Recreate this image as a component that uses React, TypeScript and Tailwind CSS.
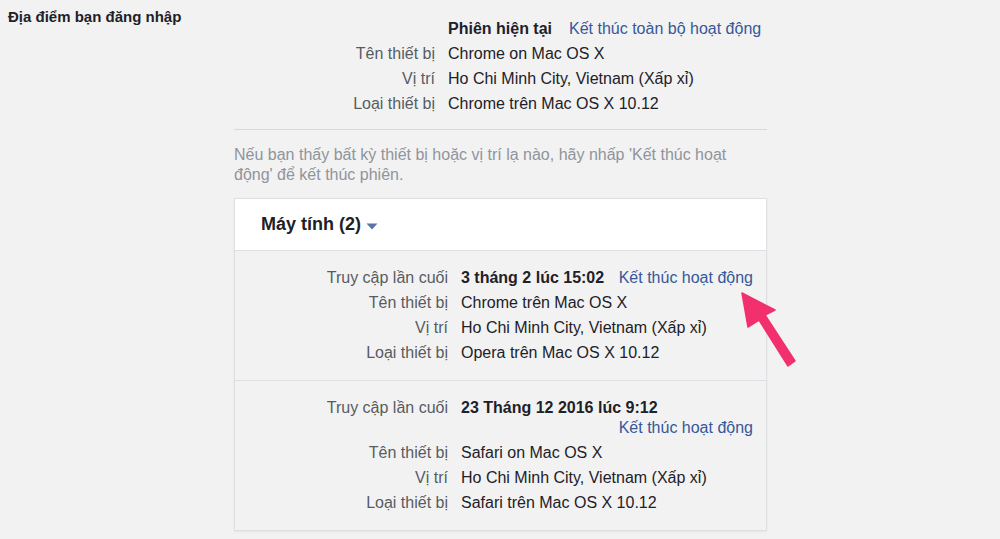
const font = "font-['Liberation_Sans','Helvetica_Neue',Arial,sans-serif]";

type Row = { label: string; value: string };

function Section({
  lastAccess,
  inline,
  rows,
  first,
}: {
  lastAccess: string;
  inline: boolean;
  rows: Row[];
  first?: boolean;
}) {
  return (
    <div
      className={`grid grid-cols-[213px_1fr] gap-x-[13px] gap-y-[5px] pt-[17px] pb-[17px] pr-[13px] text-[16px] leading-5 ${
        first ? "" : "border-t border-[#dddfe2]"
      }`}
    >
      <div className="text-right text-[#575c63]">Truy cập lần cuối</div>
      {inline ? (
        <div className="flex justify-between whitespace-nowrap">
          <span className="font-bold text-[#1d2129]">{lastAccess}</span>
          <a className="text-[#365899]">Kết thúc hoạt động</a>
        </div>
      ) : (
        <div className="flex flex-col">
          <span className="font-bold text-[#1d2129]">{lastAccess}</span>
          <a className="self-end text-[#365899]">Kết thúc hoạt động</a>
        </div>
      )}
      {rows.map((r) => (
        <div key={r.label} className="contents">
          <div className="text-right text-[#575c63]">{r.label}</div>
          <div className="text-[#1d2129]">{r.value}</div>
        </div>
      ))}
    </div>
  );
}

export default function App() {
  return (
    <div className={`relative flex min-h-[539px] w-[1000px] overflow-hidden bg-[#f2f2f2] ${font}`}>
      {/* Left title */}
      <div className="w-[234px] pl-[8px] pt-[7px]">
        <h2 className="text-[15px] font-bold leading-5 text-[#1d2129]">Địa điểm bạn đăng nhập</h2>
      </div>

      {/* Content */}
      <div className="w-[533px]">
        <div className="grid grid-cols-[201px_1fr] gap-x-[13px] gap-y-[5px] pt-[19px] text-[16px] leading-5">
          <div />
          <div className="whitespace-nowrap">
            <span className="font-bold text-[#1d2129]">Phiên hiện tại</span>
            <a className="ml-[17px] text-[#365899]">Kết thúc toàn bộ hoạt động</a>
          </div>
          <div className="text-right text-[#575c63]">Tên thiết bị</div>
          <div className="text-[#1d2129]">Chrome on Mac OS X</div>
          <div className="text-right text-[#575c63]">Vị trí</div>
          <div className="text-[#1d2129]">Ho Chi Minh City, Vietnam (Xấp xỉ)</div>
          <div className="text-right text-[#575c63]">Loại thiết bị</div>
          <div className="text-[#1d2129]">Chrome trên Mac OS X 10.12</div>
        </div>

        <div className="mt-[15px] border-t border-[#d6d8db]" />

        <p className="mt-[15px] text-[16px] leading-5 text-[#90949c]">
          Nếu bạn thấy bất kỳ thiết bị hoặc vị trí lạ nào, hãy nhấp 'Kết thúc hoạt động' để kết thúc phiên.
        </p>

        {/* Card */}
        <div className="mt-[13px] border border-[#dddfe2] shadow-[0_1px_2px_rgba(0,0,0,0.06)]">
          <div className="flex h-[52px] items-center border-b border-[#dddfe2] bg-white pl-[26px]">
            <span className="text-[18px] font-bold text-[#1d2129]">Máy tính (2)</span>
            <svg width="12" height="7" viewBox="0 0 12 7" className="ml-[5px] mt-[3px]">
              <path d="M0.5 0.5 H11.5 L6 6.5 Z" fill="#5b74a8" />
            </svg>
          </div>
          <div className="bg-[#f2f2f2]">
            <Section
              first
              inline
              lastAccess="3 tháng 2 lúc 15:02"
              rows={[
                { label: "Tên thiết bị", value: "Chrome trên Mac OS X" },
                { label: "Vị trí", value: "Ho Chi Minh City, Vietnam (Xấp xỉ)" },
                { label: "Loại thiết bị", value: "Opera trên Mac OS X 10.12" },
              ]}
            />
            <Section
              inline={false}
              lastAccess="23 Tháng 12 2016 lúc 9:12"
              rows={[
                { label: "Tên thiết bị", value: "Safari on Mac OS X" },
                { label: "Vị trí", value: "Ho Chi Minh City, Vietnam (Xấp xỉ)" },
                { label: "Loại thiết bị", value: "Safari trên Mac OS X 10.12" },
              ]}
            />
          </div>
        </div>
      </div>

      {/* Pink annotation arrow */}
      <svg
        className="pointer-events-none absolute left-[730px] top-[284px]"
        width="80"
        height="90"
        viewBox="0 0 80 90"
      >
        <path d="M12 9 L45 26 L35 31 L65 77 L58 82 L29 36 L18 43 Z" fill="#f2306e" stroke="#f2306e" strokeWidth="1.5" strokeLinejoin="round" />
      </svg>
    </div>
  );
}
